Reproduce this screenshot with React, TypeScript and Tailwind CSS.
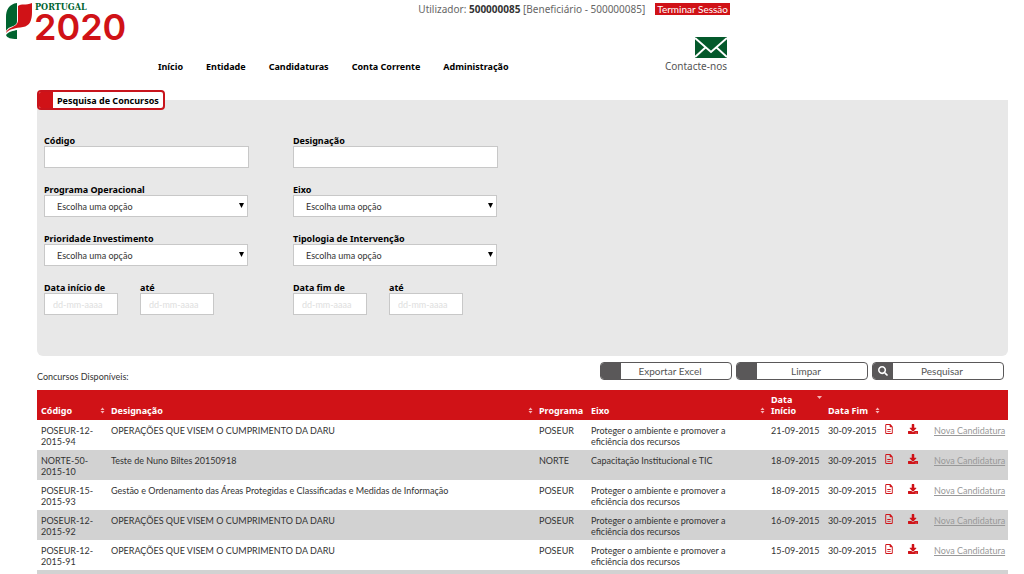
import { useState } from "react";
import type { ReactNode } from "react";
import { FaDownload, FaSearch } from "react-icons/fa";
import { FaRegFileLines } from "react-icons/fa6";

type Concurso = {
  codigo: string;
  designacao: string;
  programa: string;
  eixo: string;
  inicio: string;
  fim: string;
};

const AMBIENTE = "Proteger o ambiente e promover a eficiência dos recursos";
const DARU = "OPERAÇÕES QUE VISEM O CUMPRIMENTO DA DARU";

const concursos: Concurso[] = [
  { codigo: "POSEUR-12-2015-94", designacao: DARU, programa: "POSEUR", eixo: AMBIENTE, inicio: "21-09-2015", fim: "30-09-2015" },
  { codigo: "NORTE-50-2015-10", designacao: "Teste de Nuno Biltes 20150918", programa: "NORTE", eixo: "Capacitação Institucional e TIC", inicio: "18-09-2015", fim: "30-09-2015" },
  { codigo: "POSEUR-15-2015-93", designacao: "Gestão e Ordenamento das Áreas Protegidas e Classificadas e Medidas de Informação", programa: "POSEUR", eixo: AMBIENTE, inicio: "18-09-2015", fim: "30-09-2015" },
  { codigo: "POSEUR-12-2015-92", designacao: DARU, programa: "POSEUR", eixo: AMBIENTE, inicio: "16-09-2015", fim: "30-09-2015" },
  { codigo: "POSEUR-12-2015-91", designacao: DARU, programa: "POSEUR", eixo: AMBIENTE, inicio: "15-09-2015", fim: "30-09-2015" },
];

const menu = ["Início", "Entidade", "Candidaturas", "Conta Corrente", "Administração"];

const Logo = () => (
  <svg width="124" height="50" viewBox="4 0 124 50" role="img" aria-label="Portugal 2020">
    <path d="M17 3C9 4 6 10 6 17V31C8 27 12 27 15 25C17 24 17 22 17 20Z" fill="#00632f" />
    <path d="M18 6C21 3 26 6 32 3V12C32 20 30 26 23 27C16 28 9 29 6 33C8 26 18 28 18 20Z" fill="#d01217" />
    <path d="M6 35C9 31 13 31 17 30V39C11 39 7 38 6 35Z" fill="#00632f" />
    <text x="35" y="10" fontSize="9" fontWeight="700" fontFamily="DejaVu Serif Condensed, DejaVu Serif" fill="#00632f">
      PORTUGAL
    </text>
    <text x="34" y="40" fontSize="36" fontWeight="600" fontFamily="Inter" fill="#d01217">
      2020
    </text>
  </svg>
);

const Envelope = () => (
  <svg width="32" height="21" viewBox="0 0 32 21" aria-hidden="true">
    <rect width="32" height="21" fill="#04592b" />
    <path d="M0 1L16 15L32 1M0 20L11 10M32 20L21 10" fill="none" stroke="#fff" strokeWidth="2" />
  </svg>
);

const SortIcon = ({ active }: { active?: boolean }) => (
  <svg width="5" height="7" viewBox="0 0 5 7" className="shrink-0" aria-hidden="true">
    {active ? (
      <path d="M0 2H5L2.5 5Z" fill="#f5b5b7" />
    ) : (
      <path d="M0.5 3L2.5 0.5L4.5 3ZM0.5 4L2.5 6.5L4.5 4Z" fill="#f5b5b7" />
    )}
  </svg>
);

const Label = ({ htmlFor, children }: { htmlFor: string; children: ReactNode }) => (
  <label htmlFor={htmlFor} className="font-['Noto_Sans',sans-serif] font-bold text-black">
    {children}
  </label>
);

const TextField = ({ id, label }: { id: string; label: string }) => (
  <div className="flex flex-col">
    <Label htmlFor={id}>{label}</Label>
    <input id={id} type="text" className="h-[22px] w-full border border-[#c8c8c8] bg-white px-3" />
  </div>
);

const SelectField = ({ id, label }: { id: string; label: string }) => (
  <div className="flex flex-col">
    <Label htmlFor={id}>{label}</Label>
    <div className="relative w-[204px]">
      <select id={id} className="h-[22px] w-full appearance-none border border-[#c8c8c8] bg-white px-3">
        <option>Escolha uma opção</option>
      </select>
      <svg width="5" height="5" viewBox="0 0 5 5" className="pointer-events-none absolute top-2 right-1" aria-hidden="true">
        <path d="M0 0H5L2.5 5Z" fill="#000" />
      </svg>
    </div>
  </div>
);

const DateField = ({ id, label }: { id: string; label: string }) => (
  <div className="flex flex-col">
    <Label htmlFor={id}>{label}</Label>
    <input
      id={id}
      type="text"
      placeholder="dd-mm-aaaa"
      className="h-[22px] w-[74px] border border-[#c8c8c8] bg-white px-2 placeholder:text-[#dedede]"
    />
  </div>
);

const ActionButton = ({ icon, children, onClick }: { icon?: ReactNode; children: ReactNode; onClick?: () => void }) => (
  <button
    type="button"
    onClick={onClick}
    className="flex h-[18px] w-[132px] overflow-hidden rounded border border-[#5a5859] bg-white text-[10px] text-[#555]"
  >
    <span className="flex h-full w-5 items-center justify-center bg-[#5a5859] text-white">{icon}</span>
    <span className="flex h-full flex-1 items-center justify-center pr-3">{children}</span>
  </button>
);

const HeadCell = ({ children, sort }: { children: ReactNode; sort?: "none" | "desc" }) => (
  <th className="h-[30px] pr-[2px] pb-1 pl-1 text-left align-bottom font-bold">
    <div className={sort === "desc" ? "flex items-start justify-between" : "flex items-center justify-between"}>
      <span>{children}</span>
      {sort && <SortIcon active={sort === "desc"} />}
    </div>
  </th>
);

const App = () => {
  const [formKey, setFormKey] = useState(0);

  return (
    <div className="bg-white font-['Lato','Open_Sans',sans-serif] text-[9px] leading-[11px] text-[#333]">
      <header className="flex h-[90px] items-start pl-1">
        <Logo />
        <div className="flex w-[602px] flex-col pt-[3px] font-['Noto_Sans',sans-serif]">
          <div className="flex items-center justify-end gap-[10px] text-[10px] leading-3 text-[#666]">
            <p>
              Utilizador: <b className="text-[#333]">500000085</b> [Beneficiário - 500000085]
            </p>
            <a href="#sair" className="bg-[#d01217] px-[2px] font-['Lato',sans-serif] text-white">Terminar Sessão</a>
          </div>
          <div className="flex items-end justify-between pt-[22px] pl-[30px]">
            <nav className="flex gap-[23px] font-bold text-black">
              {menu.map((item) => (
                <a key={item} href="#menu">{item}</a>
              ))}
            </nav>
            <a href="#contacto" className="flex flex-col items-end gap-[2px] pr-[3px] text-[10px] leading-3 text-[#555]">
              <Envelope />
              Contacte-nos
            </a>
          </div>
        </div>
      </header>

      <main className="pr-4 pl-[37px]">
        <form key={formKey}>
          <fieldset className="rounded-b-md bg-[#e8e8e8] pb-[41px]">
            <legend className="flex h-5 items-center overflow-hidden rounded border-2 border-[#c8141c] bg-white font-['Noto_Sans',sans-serif] text-black">
              <span className="h-full w-[14px] bg-[#d01217]" />
              <span className="px-1 font-bold">Pesquisa de Concursos</span>
            </legend>
            <div className="grid grid-cols-[205px_205px] gap-x-11 gap-y-4 pt-[25px] pl-[7px]">
              <TextField id="codigo" label="Código" />
              <TextField id="designacao" label="Designação" />
              <SelectField id="programa" label="Programa Operacional" />
              <SelectField id="eixo" label="Eixo" />
              <SelectField id="prioridade" label="Prioridade Investimento" />
              <SelectField id="tipologia" label="Tipologia de Intervenção" />
              <div className="flex gap-[22px]">
                <DateField id="inicio-de" label="Data início de" />
                <DateField id="inicio-ate" label="até" />
              </div>
              <div className="flex gap-[22px]">
                <DateField id="fim-de" label="Data fim de" />
                <DateField id="fim-ate" label="até" />
              </div>
            </div>
          </fieldset>
        </form>

        <div className="flex items-start justify-between pt-[6px] pb-2">
          <h2 className="pt-[9px]">Concursos Disponíveis:</h2>
          <div className="flex gap-1 pr-1">
            <ActionButton>Exportar Excel</ActionButton>
            <ActionButton onClick={() => setFormKey(formKey + 1)}>Limpar</ActionButton>
            <ActionButton icon={<FaSearch />}>Pesquisar</ActionButton>
          </div>
        </div>

        <table className="w-full table-fixed border-collapse">
          <colgroup>
            <col className="w-[70px]" />
            <col />
            <col className="w-[52px]" />
            <col className="w-[180px]" />
            <col className="w-[57px]" />
            <col className="w-[58px]" />
            <col className="w-[22px]" />
            <col className="w-[26px]" />
            <col className="w-[78px]" />
          </colgroup>
          <thead className="bg-[#d01217] font-['Noto_Sans',sans-serif] text-white">
            <tr>
              <HeadCell sort="none">Código</HeadCell>
              <HeadCell sort="none">Designação</HeadCell>
              <HeadCell>Programa</HeadCell>
              <HeadCell sort="none">Eixo</HeadCell>
              <HeadCell sort="desc">Data Início</HeadCell>
              <HeadCell sort="none">Data Fim</HeadCell>
              <td colSpan={3} />
            </tr>
          </thead>
          <tbody>
            {concursos.map((c) => (
              <tr key={c.codigo} className="h-[30px] align-top odd:bg-white even:bg-[#d2d2d2]">
                <td className="px-1 pt-[5px]">{c.codigo}</td>
                <td className="px-1 pt-[5px]">{c.designacao}</td>
                <td className="px-1 pt-[5px]">{c.programa}</td>
                <td className="pt-[5px] pr-8 pl-1">{c.eixo}</td>
                <td className="px-1 pt-[5px] whitespace-nowrap">{c.inicio}</td>
                <td className="px-1 pt-[5px] whitespace-nowrap">{c.fim}</td>
                <td className="px-[2px] pt-[4px] text-[#d01217]">
                  <button type="button" aria-label="Ver aviso" className="block">
                    <FaRegFileLines size={10} />
                  </button>
                </td>
                <td className="px-1 pt-[4px] text-[#d01217]">
                  <button type="button" aria-label="Descarregar" className="block">
                    <FaDownload size={10} />
                  </button>
                </td>
                <td className="px-1 pt-[5px] text-right whitespace-nowrap">
                  <a href="#candidatura" className="text-[#999] underline">Nova Candidatura</a>
                </td>
              </tr>
            ))}
          </tbody>
          <tfoot>
            <tr>
              <td colSpan={9} className="h-1 bg-[#d2d2d2]" />
            </tr>
          </tfoot>
        </table>
      </main>
    </div>
  );
};

export default App;
